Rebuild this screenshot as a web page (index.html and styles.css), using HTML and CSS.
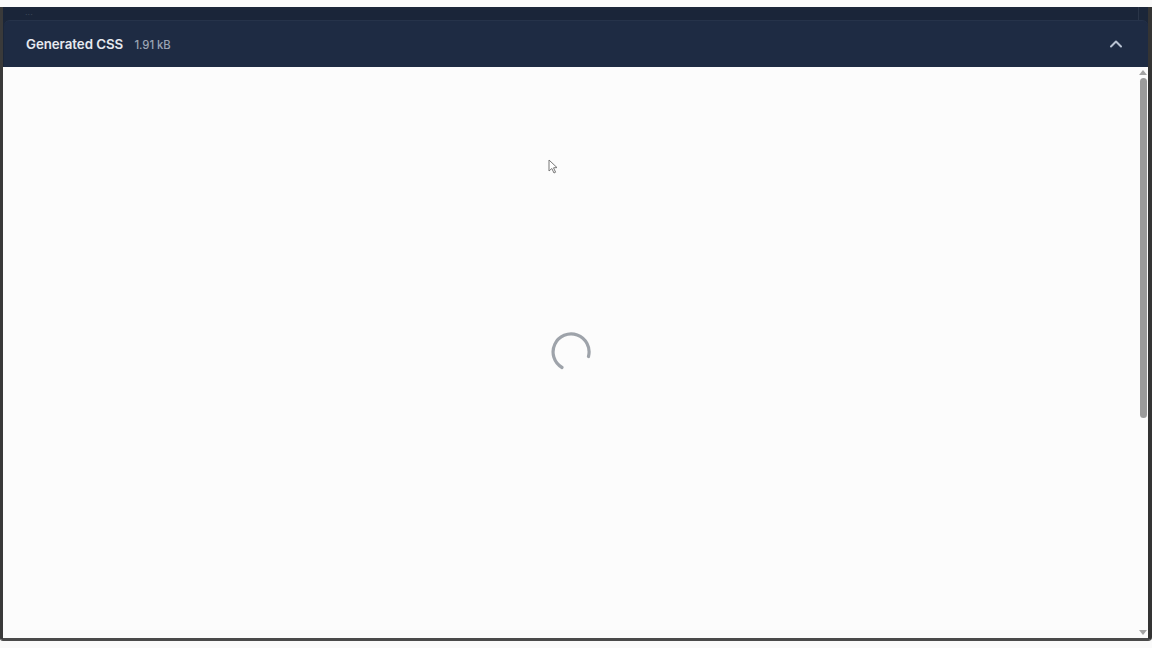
FILE: index.html
```
<!DOCTYPE html>
<html>
<head>
<meta charset="utf-8">
<link rel="stylesheet" href="styles.css">
</head>
<body>
<div class="frame">
  <div class="topband"><span class="ghost">···</span></div>
  <div class="header">
    <div class="title">Generated CSS <span class="size">1.91 kB</span></div>
    <svg class="chev" width="14" height="10" viewBox="0 0 14 10"><path d="M2 7.5 L7 2.5 L12 7.5" fill="none" stroke="#b8c2d2" stroke-width="2" stroke-linecap="round" stroke-linejoin="round"/></svg>
  </div>
  <div class="content">
    <div class="main">
      <svg class="spinner" width="40" height="40" viewBox="0 0 40 40"><path d="M37.5 24.5 A18 18 0 1 0 11 35.5" fill="none" stroke="#9ea3aa" stroke-width="3.2" stroke-linecap="round"/></svg>
    </div>
    <div class="scroll">
      <div class="arrow up"></div>
      <div class="track"><div class="thumb"></div></div>
      <div class="arrow down"></div>
    </div>
    <svg class="cursor" width="12" height="16" viewBox="0 0 12 16"><path d="M1 1 L1 12 L3.8 9.5 L6 14 L7.6 13.2 L5.5 8.8 L9 8.6 Z" fill="#fff" stroke="#777" stroke-width="1"/></svg>
  </div>
</div>
</body>
</html>
```
FILE: styles.css
```
html, body { margin: 0; padding: 0; }
body {
  background: #fafafa;
  width: 1152px;
  height: 648px;
  overflow: hidden;
  font-family: Inter, "Liberation Sans", sans-serif;
}
.frame {
  margin-top: 7px;
  height: 631px;
  border-left: 3px solid #3a3a3a;
  border-right: 4px solid #343434;
  border-bottom: 3px solid #4a4a4a;
  border-bottom-left-radius: 3px;
  border-bottom-right-radius: 4px;
  display: flex;
  flex-direction: column;
  background: #1b2639;
}
.topband {
  height: 13px;
  background: #1a2539;
  position: relative;
  border-right: 1px solid #2a3548;
  margin-right: 9px;
}
.ghost {
  position: absolute;
  left: 22px;
  top: 3px;
  font-size: 9px;
  line-height: 9px;
  color: #3b4658;
}
.header {
  height: 47px;
  background: #1e2b43;
  border-top-left-radius: 6px;
  border-top-right-radius: 6px;
  border-top: 1px solid #26334a;
  margin-left: 1px;
  display: flex;
  align-items: center;
  justify-content: space-between;
  padding: 0 25px 0 22px;
  box-sizing: border-box;
}
.title {
  color: #e6e9ef;
  font-size: 13.3px;
  font-weight: 600;
  letter-spacing: -0.05px;
  margin-top: -1px;
}
.size {
  color: #9aa4b4;
  font-size: 11.3px;
  font-weight: 500;
  margin-left: 8px;
}
.chev { display: block; margin-top: -1px; }
.content {
  flex: 1;
  background: #fcfcfc;
  display: flex;
  position: relative;
}
.main {
  flex: 1;
  display: flex;
  align-items: center;
  justify-content: center;
}
.spinner { display: block; margin-left: 1px; margin-top: -2px; }
.scroll {
  width: 10px;
  display: flex;
  flex-direction: column;
  align-items: center;
  padding: 3px 0;
  box-sizing: border-box;
}
.arrow {
  width: 0; height: 0;
  border-left: 4px solid transparent;
  border-right: 4px solid transparent;
}
.arrow.up { border-bottom: 5px solid #a4a4a4; }
.arrow.down { border-top: 5px solid #a4a4a4; }
.track {
  flex: 1;
  width: 100%;
  display: flex;
  justify-content: center;
  padding: 3px 0;
}
.thumb {
  width: 7px;
  height: 340px;
  background: #9b9b9b;
  border-radius: 4px;
}
.cursor {
  position: absolute;
  left: 545px;
  top: 92px;
}
```
